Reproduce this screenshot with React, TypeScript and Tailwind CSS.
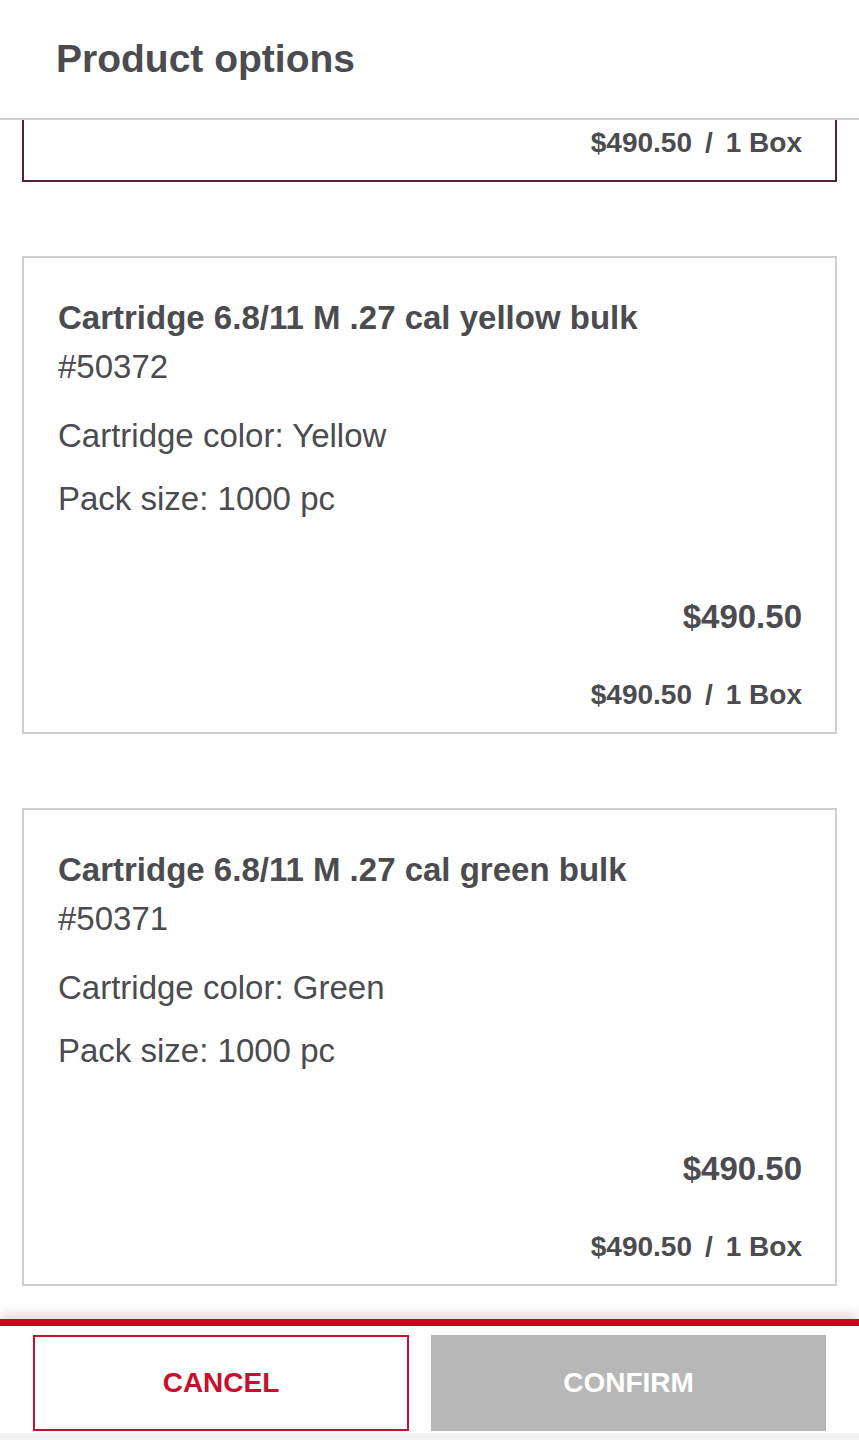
import React from "react";

const font = { fontFamily: '"Liberation Sans", Arial, Helvetica, sans-serif' };

function PerBox() {
  return (
    <div className="flex justify-end text-[28px] leading-[36px] font-bold text-[#4b4b50]">
      <span>$490.50</span>
      <span className="mx-[13px]">/</span>
      <span>1 Box</span>
    </div>
  );
}

function Card({ title, sku, color }: { title: string; sku: string; color: string }) {
  return (
    <div className="mx-[22px] border-2 border-[#cfcfcd] bg-white pl-[34px] pr-[33px] pt-[40px] pb-[19px] text-[#4b4b50]">
      <div className="text-[33px] leading-[40px] font-bold">{title}</div>
      <div className="mt-[9px] text-[33px] leading-[40px]">{sku}</div>
      <div className="mt-[29px] text-[33px] leading-[40px]">Cartridge color: {color}</div>
      <div className="mt-[23px] text-[33px] leading-[40px]">Pack size: 1000 pc</div>
      <div className="mt-[78px] flex justify-end text-[33px] leading-[40px] font-bold">$490.50</div>
      <div className="mt-[40px]">
        <PerBox />
      </div>
    </div>
  );
}

export default function App() {
  return (
    <div style={font} className="flex h-[1440px] w-[859px] flex-col overflow-hidden bg-white">
      <header className="h-[120px] shrink-0 border-b-2 border-[#cfcfcd] pl-[56px] pt-[36px]">
        <h1 className="text-[39px] leading-[46px] font-bold text-[#4b4b50]">Product options</h1>
      </header>
      <main className="flex-1 overflow-hidden">
        <div className="mx-[22px] border-x-2 border-b-2 border-[#55203a] pt-[5px] pb-[19px] pr-[33px]">
          <PerBox />
        </div>
        <div className="mt-[74px]">
          <Card title="Cartridge 6.8/11 M .27 cal yellow bulk" sku="#50372" color="Yellow" />
        </div>
        <div className="mt-[74px]">
          <Card title="Cartridge 6.8/11 M .27 cal green bulk" sku="#50371" color="Green" />
        </div>
      </main>
      <footer className="shrink-0 border-t-[7px] border-[#d0021b] bg-white shadow-[0_-6px_10px_rgba(0,0,0,0.12)]">
        <div className="flex gap-[22px] px-[33px] pt-[9px] pb-[2px]">
          <button className="flex h-[96px] w-[376px] items-center justify-center border-2 border-[#c8102e] bg-white text-[28px] font-bold text-[#c8102e]">
            CANCEL
          </button>
          <button className="flex h-[96px] flex-1 items-center justify-center bg-[#b7b7b7] text-[28px] font-bold text-white">
            CONFIRM
          </button>
        </div>
        <div className="h-[7px] bg-[#f3f3f3]" />
      </footer>
    </div>
  );
}
